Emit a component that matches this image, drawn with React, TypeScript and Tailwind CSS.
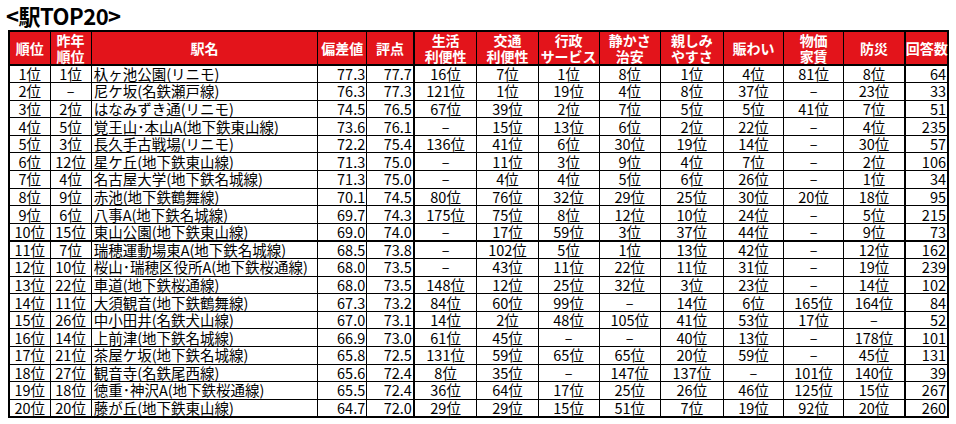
import React from "react";

type Row = string[];

const D = "–";

const rows: Row[] = [
  ["1位", "1位", "杁ヶ池公園(リニモ)", "77.3", "77.7", "16位", "7位", "1位", "8位", "1位", "4位", "81位", "8位", "64"],
  ["2位", D, "尼ケ坂(名鉄瀬戸線)", "76.3", "77.3", "121位", "1位", "19位", "4位", "8位", "37位", D, "23位", "33"],
  ["3位", "2位", "はなみずき通(リニモ)", "74.5", "76.5", "67位", "39位", "2位", "7位", "5位", "5位", "41位", "7位", "51"],
  ["4位", "5位", "覚王山･本山A(地下鉄東山線)", "73.6", "76.1", D, "15位", "13位", "6位", "2位", "22位", D, "4位", "235"],
  ["5位", "3位", "長久手古戦場(リニモ)", "72.2", "75.4", "136位", "41位", "6位", "30位", "19位", "14位", D, "30位", "57"],
  ["6位", "12位", "星ケ丘(地下鉄東山線)", "71.3", "75.0", D, "11位", "3位", "9位", "4位", "7位", D, "2位", "106"],
  ["7位", "4位", "名古屋大学(地下鉄名城線)", "71.3", "75.0", D, "4位", "4位", "5位", "6位", "26位", D, "1位", "34"],
  ["8位", "9位", "赤池(地下鉄鶴舞線)", "70.1", "74.5", "80位", "76位", "32位", "29位", "25位", "30位", "20位", "18位", "95"],
  ["9位", "6位", "八事A(地下鉄名城線)", "69.7", "74.3", "175位", "75位", "8位", "12位", "10位", "24位", D, "5位", "215"],
  ["10位", "15位", "東山公園(地下鉄東山線)", "69.0", "74.0", D, "17位", "59位", "3位", "37位", "44位", D, "9位", "73"],
  ["11位", "7位", "瑞穂運動場東A(地下鉄名城線)", "68.5", "73.8", D, "102位", "5位", "1位", "13位", "42位", D, "12位", "162"],
  ["12位", "10位", "桜山･瑞穂区役所A(地下鉄桜通線)", "68.0", "73.5", D, "43位", "11位", "22位", "11位", "31位", D, "19位", "239"],
  ["13位", "22位", "車道(地下鉄桜通線)", "68.0", "73.5", "148位", "12位", "25位", "32位", "3位", "23位", D, "14位", "102"],
  ["14位", "11位", "大須観音(地下鉄鶴舞線)", "67.3", "73.2", "84位", "60位", "99位", D, "14位", "6位", "165位", "164位", "84"],
  ["15位", "26位", "中小田井(名鉄犬山線)", "67.0", "73.1", "14位", "2位", "48位", "105位", "41位", "53位", "17位", D, "52"],
  ["16位", "14位", "上前津(地下鉄名城線)", "66.9", "73.0", "61位", "45位", D, D, "40位", "13位", D, "178位", "101"],
  ["17位", "21位", "茶屋ケ坂(地下鉄名城線)", "65.8", "72.5", "131位", "59位", "65位", "65位", "20位", "59位", D, "45位", "131"],
  ["18位", "27位", "観音寺(名鉄尾西線)", "65.6", "72.4", "8位", "35位", D, "147位", "137位", D, "101位", "140位", "39"],
  ["19位", "18位", "徳重･神沢A(地下鉄桜通線)", "65.5", "72.4", "36位", "64位", "17位", "25位", "26位", "46位", "125位", "15位", "267"],
  ["20位", "20位", "藤が丘(地下鉄東山線)", "64.7", "72.0", "29位", "29位", "15位", "51位", "7位", "19位", "92位", "20位", "260"],
];

const headers: string[][] = [
  ["順位"],
  ["昨年", "順位"],
  ["駅名"],
  ["偏差値"],
  ["評点"],
  ["生活", "利便性"],
  ["交通", "利便性"],
  ["行政", "サービス"],
  ["静かさ", "治安"],
  ["親しみ", "やすさ"],
  ["賑わい"],
  ["物価", "家賃"],
  ["防災"],
  ["回答数"],
];

const align = [
  "text-center",
  "text-center",
  "text-left pl-[2px]",
  "text-right pr-[1px]",
  "text-right pr-[1px] border-r-2",
  "text-center",
  "text-center",
  "text-center",
  "text-center",
  "text-center",
  "text-center",
  "text-center",
  "text-center border-r-2",
  "text-right pr-[1px]",
];

const headAlign = [
  "",
  "",
  "",
  "",
  "border-r-2",
  "",
  "",
  "",
  "",
  "",
  "",
  "",
  "border-r-2",
  "",
];

export default function App() {
  return (
    <div className="w-[956px] h-[424px] bg-white text-black font-['Noto_Sans_CJK_JP','Noto_Sans',sans-serif]">
      <div className="h-[30px] pl-[6px] pt-[4px] text-[22px] leading-[22px] font-bold tracking-[-0.5px]">
        &lt;駅TOP20&gt;
      </div>
      <table className="ml-[8px] table-fixed border-collapse border-2 border-black w-[941px]">
        <colgroup>
          <col className="w-[41px]" />
          <col className="w-[41px]" />
          <col className="w-[226px]" />
          <col className="w-[49px]" />
          <col className="w-[47px]" />
          <col className="w-[63px]" />
          <col className="w-[61px]" />
          <col className="w-[61px]" />
          <col className="w-[61px]" />
          <col className="w-[63px]" />
          <col className="w-[60px]" />
          <col className="w-[60px]" />
          <col className="w-[61px]" />
          <col className="w-[43px]" />
        </colgroup>
        <thead>
          <tr className="h-[34px] bg-[#e3141b] text-white">
            {headers.map((h, i) => (
              <th
                key={i}
                className={`border border-black border-b-2 p-0 text-center align-middle font-bold text-[14px] leading-[16px] whitespace-nowrap ${headAlign[i]}`}
              >
                {h.map((line, j) => (
                  <div key={j}>{line}</div>
                ))}
              </th>
            ))}
          </tr>
        </thead>
        <tbody>
          {rows.map((r, ri) => (
            <tr key={ri} className={`h-[17.6px] ${ri === 9 ? "border-b-2 border-black" : ""}`}>
              {r.map((c, ci) => (
                <td
                  key={ci}
                  className={`border border-black p-0 align-middle text-[14.5px] leading-[16px] whitespace-nowrap ${align[ci]} ${ri === 9 ? "border-b-2" : ""}`}
                >
                  {c}
                </td>
              ))}
            </tr>
          ))}
        </tbody>
      </table>
    </div>
  );
}
